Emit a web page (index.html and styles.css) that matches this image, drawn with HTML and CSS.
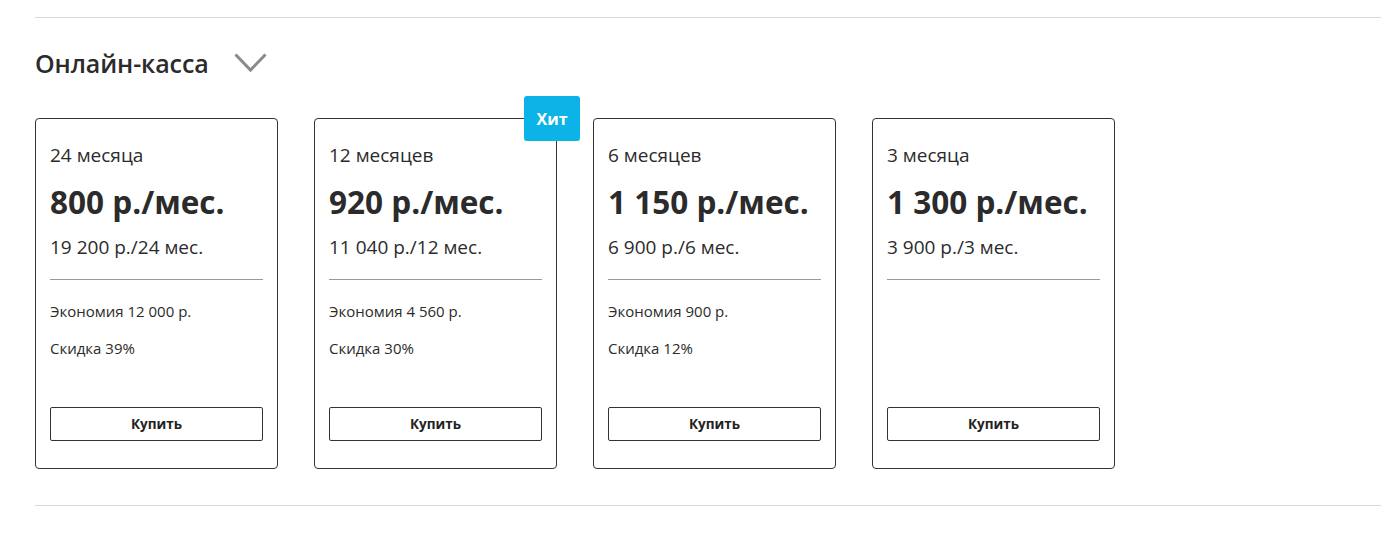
FILE: index.html
```html
<!DOCTYPE html>
<html lang="ru">
<head>
<meta charset="utf-8">
<title>Онлайн-касса</title>
<link rel="stylesheet" href="styles.css">
</head>
<body>
<section class="section">
  <div class="section-head">
    <h2 class="section-title">Онлайн-касса</h2>
    <svg class="chevron" width="33" height="20" viewBox="0 0 33 20"><path d="M1.5 1.5 L16.5 17 L31.5 1.5" fill="none" stroke="#8a8a8a" stroke-width="3"/></svg>
  </div>
  <div class="cards">
    <div class="card">
      <div class="term">24 месяца</div>
      <div class="price">800 р./мес.</div>
      <div class="total">19 200 р./24 мес.</div>
      <div class="divider"></div>
      <div class="note">Экономия 12 000 р.</div>
      <div class="note">Скидка 39%</div>
      <button class="buy">Купить</button>
    </div>
    <div class="card">
      <span class="badge">Хит</span>
      <div class="term">12 месяцев</div>
      <div class="price">920 р./мес.</div>
      <div class="total">11 040 р./12 мес.</div>
      <div class="divider"></div>
      <div class="note">Экономия 4 560 р.</div>
      <div class="note">Скидка 30%</div>
      <button class="buy">Купить</button>
    </div>
    <div class="card">
      <div class="term">6 месяцев</div>
      <div class="price">1 150 р./мес.</div>
      <div class="total">6 900 р./6 мес.</div>
      <div class="divider"></div>
      <div class="note">Экономия 900 р.</div>
      <div class="note">Скидка 12%</div>
      <button class="buy">Купить</button>
    </div>
    <div class="card">
      <div class="term">3 месяца</div>
      <div class="price">1 300 р./мес.</div>
      <div class="total">3 900 р./3 мес.</div>
      <div class="divider"></div>
      <button class="buy">Купить</button>
    </div>
  </div>
</section>
</body>
</html>
```
FILE: styles.css
```css
html, body {
  margin: 0;
  padding: 0;
  background: #fff;
}
body {
  font-family: "Open Sans", "Noto Sans", sans-serif;
  color: #2b2b2b;
}
.section {
  margin: 17px 0 0 35px;
  border-top: 1px solid #d9d9d9;
  border-bottom: 1px solid #d9d9d9;
  padding: 0 0 36px 0;
}
.section-head {
  box-sizing: border-box;
  display: flex;
  align-items: flex-start;
  gap: 25px;
  height: 100px;
  padding-top: 30px;
}
.section-title {
  margin: 0;
  font-size: 25px;
  line-height: 30px;
  font-weight: 600;
  letter-spacing: -0.1px;
  color: #2b2b2b;
}
.chevron {
  display: block;
  margin-top: 5px;
}
.cards {
  display: flex;
  gap: 36px;
}
.card {
  position: relative;
  box-sizing: border-box;
  width: 243px;
  height: 351px;
  border: 1px solid #333;
  border-radius: 4px;
  padding: 25px 14px 27px;
  display: flex;
  flex-direction: column;
}
.badge {
  position: absolute;
  top: -23px;
  right: -24px;
  width: 56px;
  height: 45px;
  border-radius: 3px;
  background: #0bb3e7;
  color: #fff;
  font-size: 16px;
  font-weight: 700;
  display: flex;
  align-items: center;
  justify-content: center;
}
.term {
  font-size: 19px;
  line-height: 22px;
}
.price {
  margin-top: 17px;
  font-size: 31.5px;
  line-height: 38px;
  font-weight: 700;
}
.total {
  margin-top: 15px;
  font-size: 19px;
  line-height: 22px;
}
.divider {
  margin-top: 21px;
  border-top: 1px solid #999;
}
.note {
  margin-top: 21px;
  font-size: 15px;
  line-height: 20px;
}
.note + .note {
  margin-top: 17px;
}
.buy {
  margin-top: auto;
  height: 34px;
  background: #fff;
  border: 1px solid #333;
  border-radius: 2px;
  font-family: inherit;
  font-size: 13.5px;
  font-weight: 700;
  color: #222;
  cursor: pointer;
  padding: 0;
}
```
